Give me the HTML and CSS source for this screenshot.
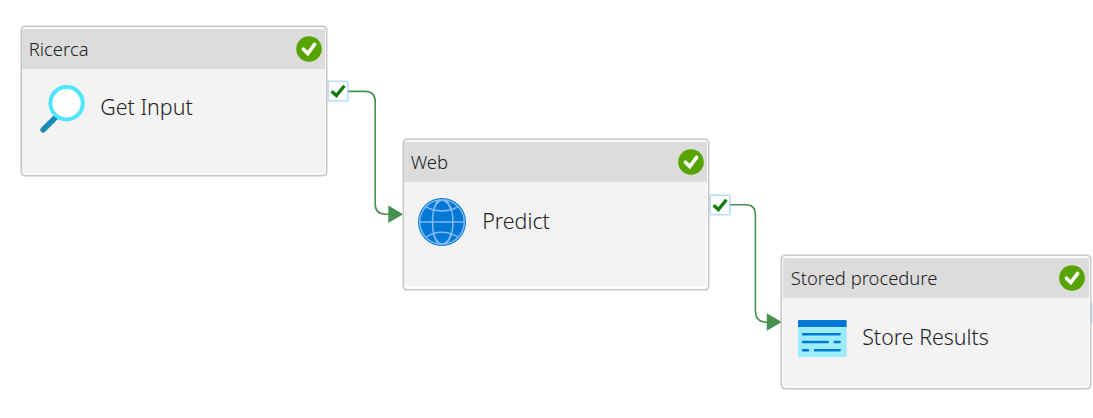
FILE: index.html
```html
<!DOCTYPE html>
<html lang="it">
<head>
<meta charset="utf-8">
<title>Pipeline</title>
<link rel="stylesheet" href="styles.css">
</head>
<body>
<main class="canvas">
  <svg class="links" viewBox="0 0 1093 418">
    <path class="link" d="M348 91.4H365Q375.2 91.4 375.2 101.5V204Q375.2 214.2 386 214.2H389"/>
    <path class="arrow" d="M388.3 205.5L403.2 214.2L388.3 223Z"/>
    <path class="link" d="M730 204.7H746Q755.4 204.7 755.4 215V311Q755.4 322.1 766 322.1H768"/>
    <path class="arrow" d="M766.8 313.3L781.8 322.1L766.8 330.8Z"/>
  </svg>

  <span class="port port-lookup"><svg class="port-check" viewBox="0 0 20 20"><path d="M3.6 10.3L8.4 14.6L16.4 4.8"/></svg></span>
  <span class="port port-web"><svg class="port-check" viewBox="0 0 20 20"><path d="M3.6 10.3L8.4 14.6L16.4 4.8"/></svg></span>
  <span class="port port-end"></span>

  <section class="card lookup">
    <header class="head"><span class="kind">Ricerca</span>
      <svg class="badge" viewBox="0 0 26 26"><circle cx="13" cy="13" r="12.8"/><path d="M7.4 13.2L11.8 17.5L18.6 8.4"/></svg>
    </header>
    <div class="body">
      <svg class="icon" viewBox="0 0 48 48"><path d="M3.2 44.7L17 31" stroke="#198ab3" stroke-width="5.6" stroke-linecap="round"/><circle cx="26.6" cy="18.2" r="16.2" fill="#fff" stroke="#50e6ff" stroke-width="4"/></svg>
      <span class="name">Get Input</span>
    </div>
  </section>

  <section class="card web">
    <header class="head"><span class="kind">Web</span>
      <svg class="badge" viewBox="0 0 26 26"><circle cx="13" cy="13" r="12.8"/><path d="M7.4 13.2L11.8 17.5L18.6 8.4"/></svg>
    </header>
    <div class="body">
      <svg class="icon" viewBox="0 0 48 48"><circle cx="24" cy="24" r="24" fill="#0078d4"/><g fill="none" stroke="#83b9f9" stroke-width="1.5"><circle cx="24" cy="24" r="22.3"/><path d="M1.7 24H46.3M8.5 9C17 14.3 31 14.3 39.5 9M8.5 39C17 32.7 31 32.7 39.5 39M20.5 2C12.5 10 12.5 38 20.5 46M27.5 2C37.5 10 37.5 38 27.5 46M24 2C19.5 3 16.5 8 15.8 13M24 2C29 3 32 8 32.8 13M15.8 35C16.8 41 20 45 24 46C28.5 45 32 41 32.8 35"/></g></svg>
      <span class="name">Predict</span>
    </div>
  </section>

  <section class="card stored">
    <header class="head"><span class="kind">Stored procedure</span>
      <svg class="badge" viewBox="0 0 26 26"><circle cx="13" cy="13" r="12.8"/><path d="M7.4 13.2L11.8 17.5L18.6 8.4"/></svg>
    </header>
    <div class="body">
      <svg class="icon" viewBox="0 0 48 48"><rect y="6" width="48.6" height="37" rx="1.3" fill="#9cebff"/><path d="M0 13V7.3Q0 6 1.3 6H47.3Q48.6 6 48.6 7.3V13Z" fill="#0078d4"/><path d="M5 20.2H41.6M5 28H29.8M36.8 28H41.6M5 36.2H10M17 36.2H41.6" stroke="#0078d4" stroke-width="2.5" stroke-linecap="round"/></svg>
      <span class="name">Store Results</span>
    </div>
  </section>
</main>
</body>
</html>
```
FILE: styles.css
```css
* {
  box-sizing: border-box;
}

body {
  margin: 0;
  background: #fff;
  color: #222;
  font-family: "Noto Sans", "Open Sans", sans-serif;
  font-weight: 360;
}

.canvas {
  position: relative;
  width: 1093px;
  height: 418px;
  overflow: hidden;
}

.links {
  position: absolute;
  inset: 0;
  width: 1093px;
  height: 418px;
}

.link {
  fill: none;
  stroke: #48904f;
  stroke-width: 1.6;
}

.arrow {
  fill: #48904f;
}

.card {
  position: absolute;
  display: flex;
  flex-direction: column;
  padding: 2px 1px 2.5px 0.5px;
  width: 306px;
  border: 1px solid #c6c6c6;
  border-radius: 4px;
  background: #fff;
  box-shadow: 0 0 0 0.5px #c8c8c8, inset 0 0 1px #c8c8c8;
}

.lookup {
  left: 20.8px;
  top: 25.5px;
  height: 150.6px;
}

.web {
  left: 402.7px;
  top: 138.7px;
  height: 151px;
}

.stored {
  left: 781.2px;
  top: 254.7px;
  width: 309.4px;
  height: 134.8px;
}

.head {
  display: flex;
  flex: none;
  align-items: center;
  justify-content: space-between;
  height: 40.3px;
  padding: 0 3px 0 6.5px;
  background: #dcdcdc;
}

.stored .head {
  padding-right: 4px;
  padding-left: 8px;
}

.kind {
  font-size: 18.4px;
  line-height: 40px;
  white-space: nowrap;
}

.badge {
  width: 26px;
  height: 26px;
  fill: #57a300;
}

.badge path {
  fill: none;
  stroke: #fff;
  stroke-width: 3.6;
  stroke-linecap: round;
}

.body {
  display: flex;
  flex: 1;
  align-items: flex-start;
  gap: 12.5px;
  padding: 16px 0 0 17.5px;
  background: #f3f3f3;
}

.web .body {
  padding-left: 14px;
  gap: 16px;
}

.stored .body {
  padding-left: 15.5px;
  gap: 16px;
}

.icon {
  flex: none;
  width: 48px;
  height: 48px;
  overflow: visible;
  fill: none;
}

.name {
  font-size: 21.4px;
  line-height: 46px;
  white-space: nowrap;
}

.lookup .name {
  line-height: 44px;
}

.port {
  position: absolute;
  width: 20px;
  height: 20px;
  border: 1px solid #b9dcfa;
  background: #fff;
  box-shadow: 0 0 2px #8dc6fa;
}

.port-lookup {
  left: 328px;
  top: 81px;
}

.port-web {
  left: 710px;
  top: 195px;
}

.port-end {
  left: 1072px;
  top: 303px;
  background: #deecf9;
}

.port-check {
  display: block;
  width: 20px;
  height: 20px;
  margin: -1px;
  fill: none;
  stroke: #107c10;
  stroke-width: 3.3;
}
```
